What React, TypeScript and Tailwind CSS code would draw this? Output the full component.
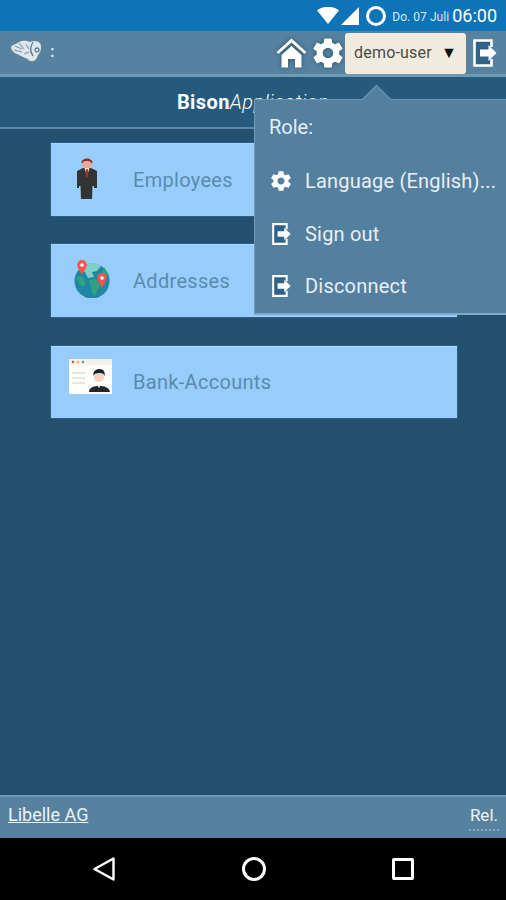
import { IoMdSettings } from "react-icons/io";

function ExitIcon({ className }: { className: string }) {
  return (
    <svg viewBox="0 0 24 28" className={className}>
      <path d="M18.500 8V1.500h-17v25h17V20" fill="#2f6287" stroke="currentColor" strokeWidth="2.600" />
      <path d="M7 10.500h8.500V6l8 8-8 8v-4.500H7z" fill="currentColor" />
    </svg>
  );
}

function HomeIcon() {
  return (
    <svg viewBox="0 0 31 30" className="w-[31px] h-[30px] drop-shadow-[0_0_2px_#2b4f68]">
      <path d="M1.500 15L15.500 2.500 29.500 15" fill="none" stroke="#fff" strokeWidth="3" />
      <path d="M5.500 17L15.500 8l10 9v12.500h-6.500V21h-7v8.500H5.500z" fill="#fff" />
    </svg>
  );
}

function BisonLogo() {
  return (
    <svg viewBox="0 0 32 24" className="w-[32px] h-[24px]">
      <path d="M1 8c2-3 6-3 8-5 4-2 8-1 11 0 3-2 8-1 10 1 2 4 1 9-2 12-1 4-4 7-7 6-3 0-3-3-6-3-3-1-5-3-8-4-3-1-6-4-6-7z" fill="#dfe6ea" />
      <path d="M5 7l7 3M9 4l5 6M4 11l8 2M14 15l5-2M16 5l3 5" stroke="#7d98ab" strokeWidth="1.100" />
      <path d="M23 3c-3 5-3 10 0 14M27 9a2 2 0 1 0 .1 0" fill="none" stroke="#5b7f99" strokeWidth="1.400" />
    </svg>
  );
}

function PersonIcon() {
  return (
    <svg viewBox="0 0 22 44" className="w-[22px] h-[44px]">
      <path d="M5.500 7c0-6 11-6 11 0z" fill="#8c2f22" />
      <rect x="6.500" y="5" width="9" height="8" rx="3.500" fill="#f0a999" />
      <path d="M1 15l6-3h8l6 3v17h-3v-2h-1.500l-.5 13H5l-.5-13H3v2H1z" fill="#333" />
      <path d="M8.500 12h5L11 20z" fill="#f3e3e0" />
      <path d="M10.200 13h1.600l.5 7-1.300 2-1.300-2z" fill="#b3282d" />
    </svg>
  );
}

function GlobeIcon() {
  return (
    <svg viewBox="0 0 38 38" className="w-[38px] h-[38px]">
      <circle cx="19" cy="21" r="17.500" fill="#1f86a3" />
      <path d="M14 4c6-2 10-1 14 2l-4 5-5 1 2 5-6 1-3-6-4-2z" fill="#7fd0c6" />
      <path d="M16 20l7-1 4 6-3 6-2 5c-3-2-4-6-4-9z" fill="#2fa37f" />
      <path d="M4 16l6 1 3 7-4 3c-3-3-5-7-5-11zM31 7l5 8-5 2-2-5z" fill="#2fa37f" />
      <path d="M9 0a4.800 4.800 0 0 1 4.800 5c0 3-3 6-4.800 10-1.800-4-4.800-7-4.800-10A4.800 4.800 0 0 1 9 0z" fill="#f4544f" />
      <circle cx="9" cy="5" r="1.800" fill="#fff" />
      <path d="M29 13a4.800 4.800 0 0 1 4.800 5c0 3-3 6-4.800 10-1.800-4-4.800-7-4.800-10a4.800 4.800 0 0 1 4.800-5z" fill="#f4544f" />
      <circle cx="29" cy="18" r="1.800" fill="#fff" />
    </svg>
  );
}

function CardIcon() {
  return (
    <svg viewBox="0 0 43 35" className="w-[43px] h-[35px]">
      <rect width="43" height="35" rx="1.500" fill="#fdfdfb" />
      <rect width="43" height="6" fill="#f3f1ea" />
      <circle cx="4" cy="3" r="1.200" fill="#e8453c" />
      <circle cx="9" cy="3" r="1.200" fill="#efb83c" />
      <circle cx="14" cy="3" r="1.200" fill="#3fae5a" />
      <path d="M3 14h14M3 19h13M3 24h13" stroke="#d5cfc0" strokeWidth="1.200" />
      <path d="M20 33c0-5 5-6 10-6s10 1 11 6z" fill="#23282c" />
      <circle cx="30" cy="18" r="5" fill="#f3d4ba" />
      <path d="M24.500 17c-1-6 4-7 6-7 4 0 6 3 5 7-1-3-3-3-5-3s-5 0-6 3z" fill="#1d2226" />
      <path d="M28 26l2 3 2-3z" fill="#e6e6e6" />
    </svg>
  );
}

const menus = [
  { label: "Employees", icon: <PersonIcon />, iconBox: "pl-[25px] mt-[-5px]", card: "h-[73px]" },
  { label: "Addresses", icon: <GlobeIcon />, iconBox: "pl-[22px] mt-[-4px]", card: "h-[73px]" },
  { label: "Bank-Accounts", icon: <CardIcon />, iconBox: "pl-[18px] mt-[-12px]", card: "h-[72px] mt-[1px]" },
];

export default function App() {
  return (
    <div className="relative flex flex-col w-[506px] h-[900px] overflow-hidden bg-[#24506f] font-['Roboto',sans-serif]">
      {/* status bar */}
      <div className="flex items-center justify-end h-[31px] bg-[#0d74b7] pr-[9px] text-white">
        <svg viewBox="0 0 22 17" className="w-[22px] h-[17px] mr-[2px]">
          <path d="M0 3.500C6-1.500 16-1.500 22 3.500L11 17z" fill="#fff" />
        </svg>
        <svg viewBox="0 0 18 18" className="w-[18px] h-[18px] mr-[7px]">
          <path d="M18 0v18H0z" fill="#fff" />
        </svg>
        <div className="w-[20px] h-[20px] rounded-full border-[3px] border-white mr-[6px]" />
        <span className="text-[12px] mr-[3px] mt-[2px] text-[#dceaf4] tracking-[0.05px]">Do. 07 Juli</span>
        <span className="text-[18px]">06:00</span>
      </div>

      {/* header */}
      <div className="flex items-center h-[46px] bg-[#56829f] border-b-[3px] border-b-[#6f99b5]">
        <div className="ml-[10px] mt-[-3px]">
          <BisonLogo />
        </div>
        <span className="ml-[8px] text-[#dfe7ec] text-[16px] font-bold mt-[-2px]">:</span>
        <div className="ml-auto flex items-center">
          <HomeIcon />
          <IoMdSettings className="text-white w-[36px] h-[36px] ml-[3px] mr-[-2px] drop-shadow-[0_0_2px_#2b4f68]" />
          <div className="flex items-center justify-between w-[121px] h-[41px] ml-[1px] mt-[1px] px-[9px] rounded-[3px] bg-[#f0ecdd] text-[#4a4a4a] text-[16px] tracking-[0.2px]">
            <span>demo-user</span>
            <span className="text-[16px] text-[#111]">▼</span>
          </div>
          <ExitIcon className="text-white w-[24px] h-[30px] ml-[7px] mr-[9px]" />
        </div>
      </div>

      {/* title */}
      <div className="flex items-center justify-center h-[52px] bg-[#255a7d] border-b-[2px] border-b-[#5c88a6] text-white text-[20px] tracking-[0.4px]">
        <span className="font-bold">Bison</span>
        <span className="italic font-light">Application</span>
      </div>

      {/* menu cards */}
      <div className="flex-1 flex flex-col gap-[28px] pt-[14px] pl-[51px]">
        {menus.map((m) => (
          <div
            key={m.label}
            className={`flex items-center w-[406px] ${m.card} bg-[#98cdfb] border-t border-t-[#a8d6fc] shadow-[0_0_0_1px_#2a6085]`}
          >
            <div className={`w-[82px] ${m.iconBox}`}>{m.icon}</div>
            <span className="text-[20px] tracking-[0.3px] text-[#5a8bae] mt-[-1px]">{m.label}</span>
          </div>
        ))}
      </div>

      {/* footer */}
      <div className="flex items-start justify-between h-[43px] bg-[#56829f] border-t-[2px] border-t-[#6f99b5] px-[8px] text-[#eef3f6] text-[18px]">
        <a className="underline mt-[6px] leading-[24px]">Libelle AG</a>
        <div className="flex flex-col items-end mt-[6px] leading-[24px]">
          <span className="text-[17px]">Rel.</span>
          <span className="w-[30px] h-[2px] mt-[2px] border-t-[2px] border-dotted border-t-[#8fabbf] mr-[-1px]" />
        </div>
      </div>

      {/* android nav */}
      <div className="flex items-center justify-center gap-[126px] h-[62px] bg-black">
        <svg viewBox="0 0 24 26" className="w-[24px] h-[26px]">
          <path d="M21.500 2.500v21L2.500 13z" fill="none" stroke="#fff" strokeWidth="2.400" strokeLinejoin="round" />
        </svg>
        <div className="w-[24px] h-[24px] rounded-full border-[3px] border-white" />
        <div className="w-[22px] h-[22px] rounded-[2px] border-[3px] border-white" />
      </div>

      {/* popover */}
      <div className="absolute left-[254px] top-[99px] w-[252px] h-[216px] bg-[#54809f] border-l border-l-[#6f99b5] border-t border-t-[#6f99b5] border-b-[2px] border-b-[#7eabc9] text-[#e8eff4] text-[20px]">
        <div className="absolute left-[111px] top-[-11px] w-[21px] h-[21px] rotate-45 bg-[#54809f] border-l border-t border-[#6f99b5]" />
        <div className="relative flex items-center h-[54px] pl-[14px]">Role:</div>
        <div className="relative flex items-center h-[53px] pl-[14px]">
          <IoMdSettings className="w-[24px] h-[24px] text-white mr-[12px]" />
          <span className="tracking-[0.2px]">Language (English)...</span>
        </div>
        <div className="relative flex items-center h-[53px] pl-[17px]">
          <ExitIcon className="w-[19px] h-[24px] text-white mr-[14px]" />
          <span className="tracking-[0.2px]">Sign out</span>
        </div>
        <div className="relative flex items-center h-[52px] pl-[17px]">
          <ExitIcon className="w-[19px] h-[24px] text-white mr-[14px]" />
          <span className="tracking-[0.2px]">Disconnect</span>
        </div>
      </div>
    </div>
  );
}
